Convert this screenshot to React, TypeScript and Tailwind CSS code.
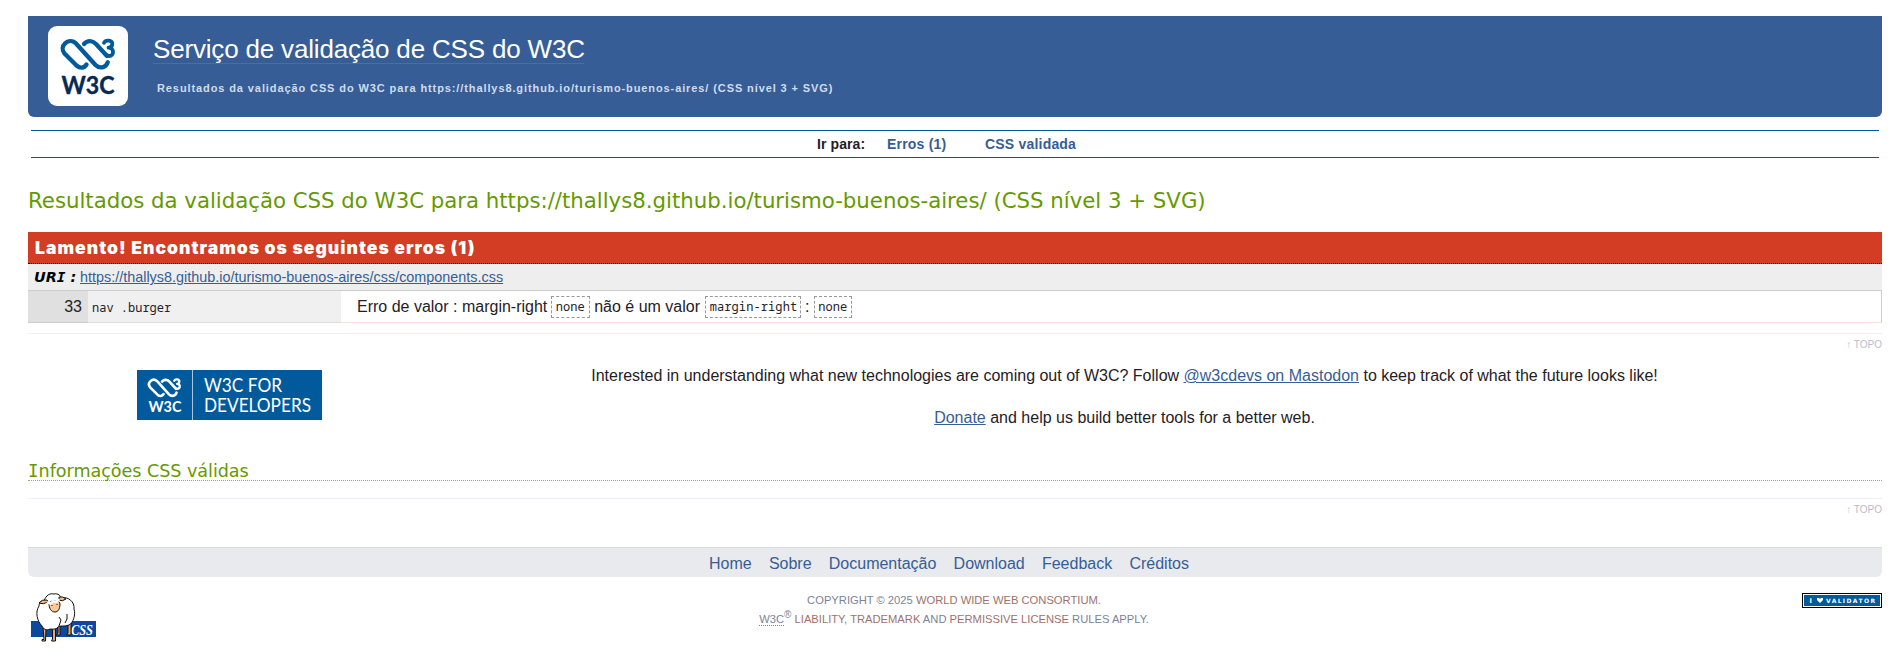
import React from "react";

function Mark({ color }: { color: string }) {
  return (
    <g fill="none" stroke={color} strokeLinecap="round" strokeLinejoin="round" strokeWidth="4.300">
      <path d="M25.500 25.500 C23 29.500 19 29.500 15.500 26.500 L3.500 14.500 C-2.500 7.500 7.500 -2 14.500 4 L34.500 26 C38.500 30 45 29 46.800 23.200" />
      <path d="M23 5 C26.500 1 31.500 1.500 35 5 L46 17" />
      <path d="M43 3.800 C44.500 .5 51.800 .8 51.300 5 C51 8 49 8.700 47.500 8.700 C53.500 8.700 53.500 17 48 17 L45.500 16" strokeWidth="3.800" />
    </g>
  );
}

function W3CLogo() {
  return (
    <svg className="block h-20 w-20 shrink-0" viewBox="0 0 80 80">
      <rect width="80" height="80" rx="9" fill="#fff" />
      <g transform="translate(13 13)">
        <Mark color="#005a9c" />
      </g>
      <text x="13.500" y="67.500" textLength="53" lengthAdjust="spacingAndGlyphs" fontFamily="Lato" fontWeight="700" fontSize="24.500" fill="#062a55" stroke="#062a55" strokeWidth=".4">W3C</text>
    </svg>
  );
}

function DevLogo() {
  return (
    <svg className="block h-[50px] w-[185px]" viewBox="0 0 185 50">
      <rect width="185" height="50" fill="#005a9c" />
      <rect x="55" width="1" height="50" fill="#a9c6de" />
      <g transform="translate(11 8.500) scale(.61)">
        <Mark color="#fff" />
      </g>
      <text x="11.500" y="42" textLength="33" lengthAdjust="spacingAndGlyphs" fontFamily="Lato" fontWeight="700" fontSize="15.500" fill="#fff">W3C</text>
      <g fontFamily="Lato" fontSize="18.500" fill="#fff">
        <text x="67" y="21.500" textLength="78" lengthAdjust="spacingAndGlyphs">W3C FOR</text>
        <text x="67" y="42" textLength="107" lengthAdjust="spacingAndGlyphs">DEVELOPERS</text>
      </g>
    </svg>
  );
}

function Sheep() {
  return (
    <svg className="block h-[50px] w-[70px]" viewBox="0 0 70 50">
      <rect x="1" y="29" width="65" height="16" fill="#0b48a0" />
      <text x="41" y="42.500" textLength="22" lengthAdjust="spacingAndGlyphs" fontFamily="Liberation Serif" fontStyle="italic" fontWeight="700" fontSize="14" fill="#fff">CSS</text>
      <g stroke="#111" strokeWidth="1" strokeLinejoin="round">
        <path d="M13 36 L14 47.500 H12 V49 H15.500 L16 37Z M22.500 36 V47 L21.500 49 H25.500 V36Z M28 32 V41 L26.500 43 H30 V32Z M38 32 V41 L36.500 43 H41 V31Z" fill="#e8a868" />
        <path d="M14 9 C16 3 20 1 24 2 C28 1 31 4 31 6 C38 4 45 10 44 17 C46 23 43 31 39 33 C35 35 30 33 28 35 C26 38 22 37 20 37 C17 39 13 37 12 34 C7 29 5 20 9 14 C9 11 11 8 14 9Z" fill="#fff" />
        <path d="M17 8 Q12 7 9 11 Q13 13 18 10Z M29 5 Q33 4 36 7 Q32 10 29 8Z" fill="#f5ba83" />
        <path d="M19 12 C19 8 30 7 30 12 C30 17 28 20 25 20 C21 20 19 16 19 12Z" fill="#fdc899" />
        <path d="M17 10 Q21 13 23 9 Q27 11 29 7" fill="none" stroke="#fff" strokeWidth="2.500" />
        <path d="M29 25 L31 28 L29 34 M37 22 V27 L35 31 M22 13 V14 M27 12 V13" fill="none" />
      </g>
    </svg>
  );
}

function Badge() {
  return (
    <svg className="block h-[15px] w-20" viewBox="0 0 80 15">
      <rect width="80" height="15" fill="#000" />
      <rect x="1" y="1" width="78" height="13" fill="#fff" />
      <rect x="2" y="2" width="76" height="11" fill="#005a9c" />
      <text x="7.500" y="10" fontFamily="DejaVu Sans" fontWeight="700" fontSize="6.500" fill="#fff">I</text>
      <path d="M15 5 H17 L18 6 L19 5 H21 V7 L18 10 L15 7Z" fill="#fff" />
      <text x="24" y="10" textLength="49" fontFamily="DejaVu Sans" fontWeight="700" fontSize="6" fill="#fff">VALIDATOR</text>
    </svg>
  );
}

function Code({ children, w }: { children: string; w: string }) {
  return (
    <code className={"inline-flex h-[22px] items-center justify-center border border-dashed border-[#999] pt-px font-['Noto_Sans_Mono','DejaVu_Sans_Mono',monospace] text-[12px] leading-none tracking-[0.1px] " + w}>
      {children}
    </code>
  );
}

function TopLink() {
  return (
    <div className="h-[30px] border-t border-[#eef] pt-[5px] text-right text-[10px] leading-[12px] text-[#bbc]">
      <span className="inline-block w-[5px] font-bold">↑</span> TOPO
    </div>
  );
}

const link = "text-[#365d95] underline";

export default function App() {
  return (
    <div className="flex h-[662px] flex-col bg-white pl-[28px] pr-[19px] pt-4 font-['Liberation_Sans',Arial,sans-serif] text-[16px] text-[#1f2126]">
      <header className="flex h-[101px] shrink-0 rounded-b-[6px] bg-[#365d95] pl-5 pt-[10px]">
        <W3CLogo />
        <div className="pl-[25px] pt-[6px]">
          <h1 className="h-[32px] w-[431px] whitespace-nowrap border-b border-[#48709f] text-[26px] leading-[34px] tracking-[-0.18px] text-white">Serviço de validação de CSS do W3C</h1>
          <p className="whitespace-nowrap pl-[4px] pt-[17px] text-[11px] font-bold leading-[14px] tracking-[0.9px] text-[#d0dcee]">
            Resultados da validação CSS do W3C para https://thallys8.github.io/turismo-buenos-aires/ (CSS nível 3 + SVG)
          </p>
        </div>
      </header>
      <nav className="mx-[3px] mt-[13px] flex h-[28px] shrink-0 border-y border-[#005a9c] pl-[786px] text-[14px] font-bold leading-[26px] text-[#365d95]">
        <span className="w-[70px] tracking-[0.1px] text-[#1f2126]">Ir para:</span>
        <span className="w-[98px] tracking-[0.2px]">Erros (1)</span>
        <span className="tracking-[0.2px]">CSS validada</span>
      </nav>
      <h2 className="mt-[28px] h-[46px] shrink-0 whitespace-nowrap font-['DejaVu_Sans',Verdana,sans-serif] text-[21.3px] leading-[30px] tracking-[-0.02px] text-[#690]">
        Resultados da validação CSS do W3C para https://thallys8.github.io/turismo-buenos-aires/ (CSS nível 3 + SVG)
      </h2>
      <h3 className="h-8 shrink-0 border-b border-dotted border-black bg-[#d23d24] pl-[7px] font-['Inter','Arial_Black',sans-serif] text-[17.600px] font-black leading-[32px] tracking-[1px] text-white">
        Lamento! Encontramos os seguintes erros (1)
      </h3>
      <div className="flex h-[27px] shrink-0 items-center border-b border-[#ccc] bg-[#eee] pl-[6px] pt-[2px] text-[14.4px]">
        <span className="w-[46px] whitespace-nowrap font-['DejaVu_Sans',Verdana] text-[14.4px] font-bold italic text-black">
          UR<span className="font-['DejaVu_Sans_Mono']">I</span> :
        </span>
        <a className={link}>https://thallys8.github.io/turismo-buenos-aires/css/components.css</a>
      </div>
      <div className="flex h-8 shrink-0">
        <div className="w-[60px] border-b border-[#ccc] bg-[#e0e0e0] pr-[6px] text-right leading-[31px]">33</div>
        <div className="w-[253px] border-b border-[#ddd] bg-[#f0f0f0] pl-[4px] font-['Noto_Sans_Mono','DejaVu_Sans_Mono',monospace] text-[12px] leading-[33px]">nav .burger</div>
        <div className="flex flex-1 items-center whitespace-pre border-b border-r border-b-[#fdd] border-r-[#ccc] pl-4">
          <span className="-mr-px">Erro de valor : margin-right </span>
          <Code w="w-[39px]">none</Code>
          <span className="pr-px">{" não é um valor "}</span>
          <Code w="w-[96px]">margin-right</Code>
          <span className="-ml-px"> : </span>
          <Code w="w-[38px]">none</Code>
        </div>
      </div>
      <div className="mt-[10px] shrink-0"><TopLink /></div>
      <div className="mt-[7px] flex h-[88px] shrink-0">
        <div className="w-[404px] pl-[109px]"><DevLogo /></div>
        <div className="-mt-[4px] flex-1 pr-[65px] text-center leading-[20px]">
          <p>Interested in understanding what new technologies are coming out of W3C? Follow <a className={link}>@w3cdevs on Mastodon</a> to keep track of what the future looks like!</p>
          <p className="mt-[22px]"><a className={link}>Donate</a> and help us build better tools for a better web.</p>
        </div>
      </div>
      <h3 className="h-[23px] shrink-0 border-b border-dotted border-[#9a6] font-['DejaVu_Sans',Verdana,sans-serif] text-[17.600px] leading-[26px] tracking-[-0.05px] text-[#690]">
        <span className="font-['DejaVu_Sans_Mono']">I</span>nformações CSS válidas
      </h3>
      <div className="mt-[17px] shrink-0"><TopLink /></div>
      <footer className="mt-[19px]">
        <ul className="flex h-[30px] justify-center gap-[17.200px] rounded-b-[6px] border-t border-[#dadcdf] bg-[#e8eaee] pr-[12px] leading-[32px] text-[#365d95]">
          <li>Home</li><li>Sobre</li><li>Documentação</li><li>Download</li><li>Feedback</li><li>Créditos</li>
        </ul>
        <div className="flex justify-between pt-[15px]">
          <div className="w-20 pl-[2px]"><Sheep /></div>
          <div className="-mt-px pr-[2px] text-center text-[11.2px] leading-[19px] text-[#7a8499]">
            <p>COPYRIGHT © 2025 <a className="text-[#a0716b]">WORLD WIDE WEB CONSORTIUM</a>.</p>
            <p><abbr className="underline decoration-dotted underline-offset-2">W3C</abbr><sup className="text-[10px]">®</sup> <a className="text-[#a0716b]">LIABILITY</a>, <a className="text-[#a0716b]">TRADEMARK</a> AND <a className="text-[#a0716b]">PERMISSIVE LICENSE</a> RULES APPLY.</p>
          </div>
          <div className="pt-px"><Badge /></div>
        </div>
      </footer>
    </div>
  );
}
